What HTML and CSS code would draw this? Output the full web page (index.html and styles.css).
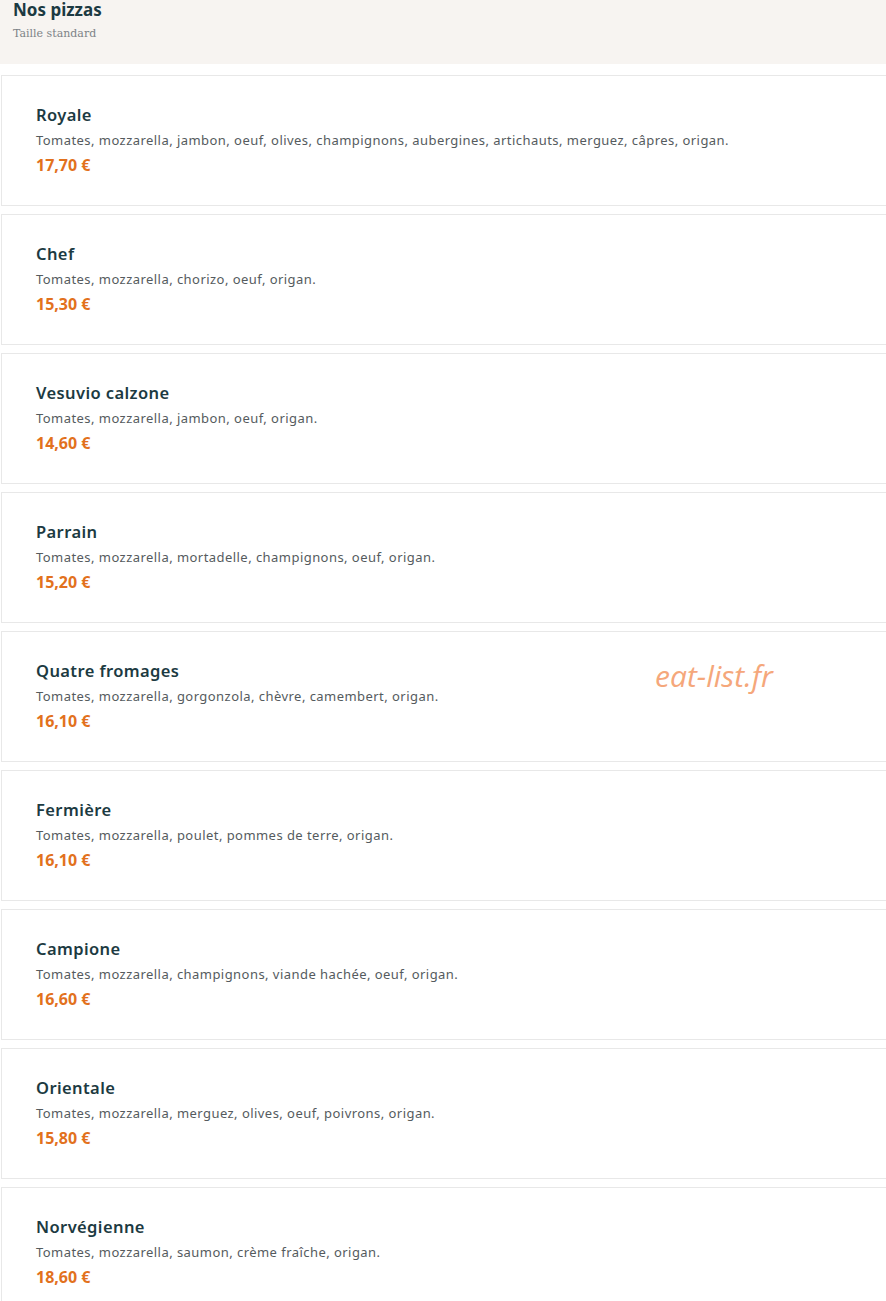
FILE: index.html
```html
<!DOCTYPE html>
<html lang="fr">
<head>
    <meta charset="UTF-8">
    <meta name="viewport" content="width=device-width, initial-scale=1.0">
    <title>Nos pizzas</title>
    <link rel="stylesheet" href="styles.css">
</head>
<body>
    <!-- en-tête de section -->
    <div class="section-header">
        <h2 class="section-title">Nos pizzas</h2>
        <p class="section-subtitle">Taille standard</p>
    </div>

    <!-- liste des pizzas -->
    <div class="menu-list">
        <div class="menu-item">
            <h3 class="item-name">Royale</h3>
            <p class="item-desc">Tomates, mozzarella, jambon, oeuf, olives, champignons, aubergines, artichauts, merguez, câpres, origan.</p>
            <p class="item-price">17,70 €</p>
        </div>
        <div class="menu-item">
            <h3 class="item-name">Chef</h3>
            <p class="item-desc">Tomates, mozzarella, chorizo, oeuf, origan.</p>
            <p class="item-price">15,30 €</p>
        </div>
        <div class="menu-item">
            <h3 class="item-name">Vesuvio calzone</h3>
            <p class="item-desc">Tomates, mozzarella, jambon, oeuf, origan.</p>
            <p class="item-price">14,60 €</p>
        </div>
        <div class="menu-item">
            <h3 class="item-name">Parrain</h3>
            <p class="item-desc">Tomates, mozzarella, mortadelle, champignons, oeuf, origan.</p>
            <p class="item-price">15,20 €</p>
        </div>
        <div class="menu-item">
            <h3 class="item-name">Quatre fromages</h3>
            <p class="item-desc">Tomates, mozzarella, gorgonzola, chèvre, camembert, origan.</p>
            <p class="item-price">16,10 €</p>
            <span class="watermark">eat-list.fr</span>
        </div>
        <div class="menu-item">
            <h3 class="item-name">Fermière</h3>
            <p class="item-desc">Tomates, mozzarella, poulet, pommes de terre, origan.</p>
            <p class="item-price">16,10 €</p>
        </div>
        <div class="menu-item">
            <h3 class="item-name">Campione</h3>
            <p class="item-desc">Tomates, mozzarella, champignons, viande hachée, oeuf, origan.</p>
            <p class="item-price">16,60 €</p>
        </div>
        <div class="menu-item">
            <h3 class="item-name">Orientale</h3>
            <p class="item-desc">Tomates, mozzarella, merguez, olives, oeuf, poivrons, origan.</p>
            <p class="item-price">15,80 €</p>
        </div>
        <div class="menu-item">
            <h3 class="item-name">Norvégienne</h3>
            <p class="item-desc">Tomates, mozzarella, saumon, crème fraîche, origan.</p>
            <p class="item-price">18,60 €</p>
        </div>
    </div>
</body>
</html>
```

FILE: styles.css
```css
* {
    margin: 0;
    padding: 0;
    box-sizing: border-box;
}

body {
    background: #fff;
    font-family: 'Noto Sans', 'Open Sans', sans-serif;
    overflow: hidden;
}

/* en-tête */
.section-header {
    height: 64px;
    background: #f7f4f1;
    padding: 0 13px;
}

.section-title {
    font-size: 17px;
    line-height: 20px;
    font-weight: 700;
    color: #1c3a42;
}

.section-subtitle {
    margin-top: 6px;
    font-family: 'DejaVu Serif', 'Liberation Serif', serif;
    font-size: 11px;
    line-height: 16px;
    color: #7d8387;
}

/* liste */
.menu-list {
    display: flex;
    flex-direction: column;
    gap: 8px;
    padding: 11px 0 0 1px;
}

.menu-item {
    position: relative;
    height: 131px;
    padding: 29px 34px 30px;
    border: 1px solid #e8e8e8;
    border-right: none;
    display: flex;
    flex-direction: column;
    gap: 5px;
}

.item-name {
    font-size: 16.5px;
    line-height: 20px;
    font-weight: 600;
    letter-spacing: 0.4px;
    color: #1c3a42;
}

.item-desc {
    font-size: 13px;
    line-height: 20px;
    letter-spacing: 0.45px;
    color: #555b5e;
}

.item-price {
    font-size: 16px;
    line-height: 20px;
    font-weight: 700;
    color: #e2711d;
}

/* filigrane */
.watermark {
    position: absolute;
    left: 653px;
    top: 23px;
    font-family: 'Open Sans', sans-serif;
    font-style: italic;
    font-size: 30px;
    color: #f5a77b;
}
```
